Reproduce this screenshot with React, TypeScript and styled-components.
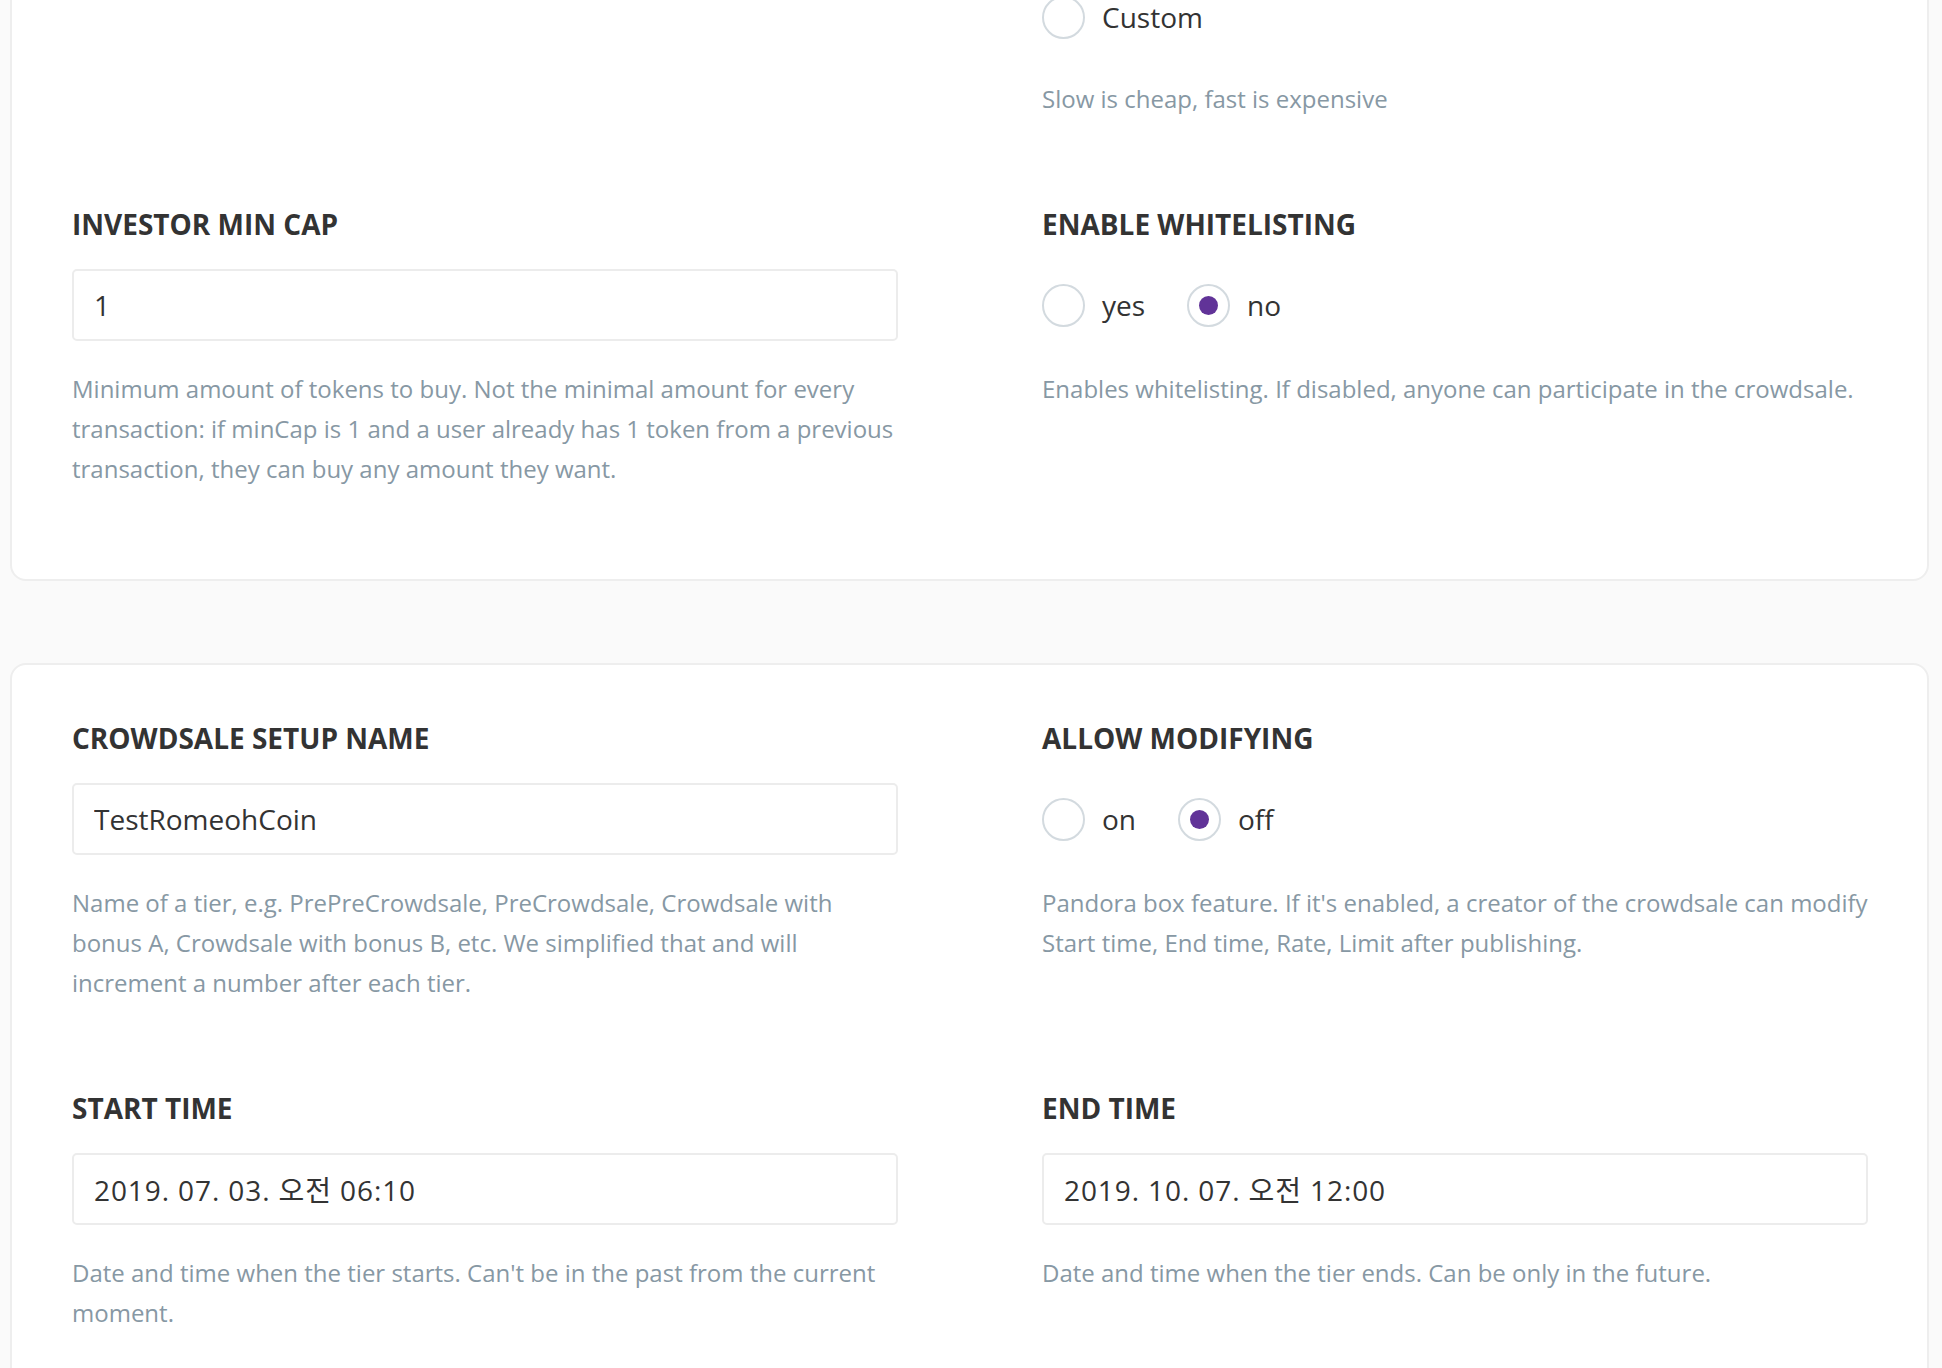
import * as React from 'react';
import styled, { createGlobalStyle } from 'styled-components';

function App() {
  return (
    <>
      <GlobalStyle />
      <Page>
        <Card>
          <Field>
            <Label>WALLET ADDRESS</Label>
            <Input readOnly defaultValue="0x4b3b6C32e4bF0a6b6F5f2C7a1e2b6b8F9c1D2e3A" />
            <Help>Where the money goes after investors transactions.</Help>
          </Field>
          <Field>
            <Label>GAS PRICE</Label>
            <RadioStack>
              <Radio label="Safe and cheap" />
              <Radio label="Normal" />
              <Radio label="Fast" />
              <Radio label="Custom" />
            </RadioStack>
            <Help>Slow is cheap, fast is expensive</Help>
          </Field>
          <Field>
            <Label>INVESTOR MIN CAP</Label>
            <Input readOnly defaultValue="1" />
            <Help>
              Minimum amount of tokens to buy. Not the minimal amount for every transaction: if minCap is 1
              and a user already has 1 token from a previous transaction, they can buy any amount they want.
            </Help>
          </Field>
          <Field>
            <Label>ENABLE WHITELISTING</Label>
            <RadioRow>
              <Radio label="yes" />
              <Radio label="no" checked />
            </RadioRow>
            <Help>Enables whitelisting. If disabled, anyone can participate in the crowdsale.</Help>
          </Field>
        </Card>

        <Card>
          <Field>
            <Label>CROWDSALE SETUP NAME</Label>
            <Input readOnly defaultValue="TestRomeohCoin" />
            <Help>
              Name of a tier, e.g. PrePreCrowdsale, PreCrowdsale, Crowdsale with bonus A, Crowdsale with
              bonus B, etc. We simplified that and will increment a number after each tier.
            </Help>
          </Field>
          <Field>
            <Label>ALLOW MODIFYING</Label>
            <RadioRow>
              <Radio label="on" />
              <Radio label="off" checked />
            </RadioRow>
            <Help>
              Pandora box feature. If it's enabled, a creator of the crowdsale can modify Start time, End
              time, Rate, Limit after publishing.
            </Help>
          </Field>
          <Field>
            <Label>START TIME</Label>
            <Input $date readOnly defaultValue="2019. 07. 03. 오전 06:10" />
            <Help>Date and time when the tier starts. Can't be in the past from the current moment.</Help>
          </Field>
          <Field>
            <Label>END TIME</Label>
            <Input $date readOnly defaultValue="2019. 10. 07. 오전 12:00" />
            <Help>Date and time when the tier ends. Can be only in the future.</Help>
          </Field>
          <Field>
            <Label>RATE</Label>
            <Input readOnly defaultValue="1000" />
            <Help>Exchange rate Ethereum to Tokens. If it's 100, then for 1 Ether you can buy 100 tokens.</Help>
          </Field>
          <Field>
            <Label>SUPPLY</Label>
            <Input readOnly defaultValue="100000" />
            <Help>How many tokens will be sold on this tier.</Help>
          </Field>
        </Card>
      </Page>
    </>
  );
}

function Radio({ label, checked }: { label: string; checked?: boolean }) {
  return (
    <RadioOption>
      <RadioCircle $checked={checked} />
      {label}
    </RadioOption>
  );
}

const GlobalStyle = createGlobalStyle`
  body {
    margin: 0;
    background: #fafafa;
    font-family: "Open Sans", "Noto Sans CJK KR", sans-serif;
    overflow: hidden;
  }
`;

// the page is scrolled down a bit in the reference
const Page = styled.div`
  width: 1919px;
  margin: -295px 0 0 10px;
  display: flex;
  flex-direction: column;
  gap: 82px;
  padding-bottom: 80px;
`;

const Card = styled.section`
  display: grid;
  grid-template-columns: 826px 826px;
  column-gap: 144px;
  row-gap: 88px;
  align-items: start;
  padding: 56px 59px 90px 60px;
  background: #fff;
  border: 2px solid #eeeeee;
  border-radius: 16px;
`;

const Field = styled.div`
  display: flex;
  flex-direction: column;
`;

const Label = styled.h3`
  margin: 0 0 28px;
  font-size: 28px;
  line-height: 34px;
  font-weight: 700;
  color: #333;
`;

const Input = styled.input<{ $date?: boolean }>`
  display: block;
  box-sizing: border-box;
  width: 100%;
  height: 72px;
  padding: 0 20px;
  border: 2px solid #ececec;
  border-radius: 5px;
  background: #fff;
  color: #333;
  font-family: "Open Sans", "Noto Sans CJK KR", sans-serif;
  font-size: 28px;
  letter-spacing: ${(p) => (p.$date ? '0.9px' : 'normal')};
  outline: none;
`;

const Help = styled.p`
  margin: 28px 0 0;
  font-size: 24px;
  line-height: 40px;
  color: #8798a4;
`;

const RadioRow = styled.div`
  display: flex;
  align-items: center;
  gap: 42px;
  height: 72px;
`;

const RadioStack = styled.div`
  display: flex;
  flex-direction: column;
  gap: 14px;
  padding-bottom: 12px;
`;

const RadioOption = styled.label`
  display: flex;
  align-items: center;
  gap: 17px;
  font-size: 28px;
  line-height: 43px;
  color: #333;
`;

const RadioCircle = styled.span<{ $checked?: boolean }>`
  box-sizing: border-box;
  display: flex;
  align-items: center;
  justify-content: center;
  flex-shrink: 0;
  width: 43px;
  height: 43px;
  border: 2px solid #d3dadf;
  border-radius: 50%;
  background: #fff;

  &::after {
    content: '';
    display: ${(p) => (p.$checked ? 'block' : 'none')};
    width: 19px;
    height: 19px;
    border-radius: 50%;
    background: #613398;
  }
`;

export default App;
